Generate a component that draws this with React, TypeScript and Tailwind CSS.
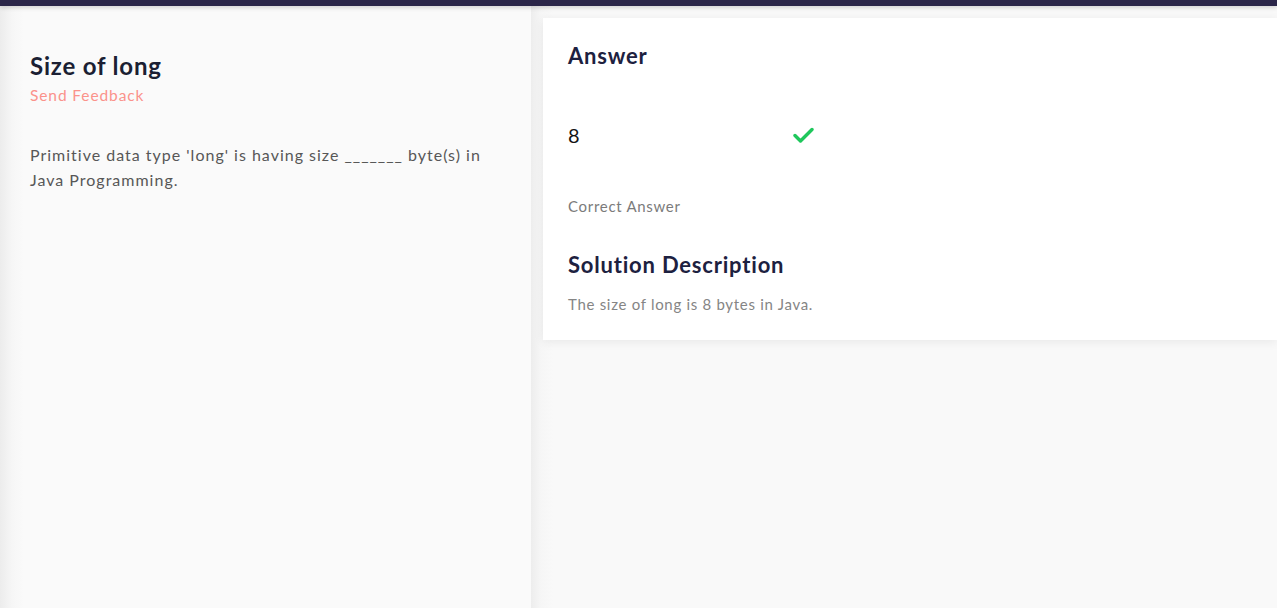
import React from "react";

const font = { fontFamily: "Lato, 'Noto Sans', sans-serif" };

function Check() {
  return (
    <svg width="21" height="16" viewBox="0 0 21 16" className="text-[#1fc75c]">
      <path d="M2 8.5 L7.5 14 L19 2.5" fill="none" stroke="currentColor" strokeWidth="3.4" strokeLinecap="round" strokeLinejoin="round" />
    </svg>
  );
}

export default function App() {
  return (
    <div className="h-[608px] w-[1277px] overflow-hidden flex flex-col bg-[#fafafa]" style={font}>
      {/* top bar */}
      <div className="h-[6px] bg-[#2b2649] shrink-0 shadow-[0_2px_4px_rgba(0,0,0,0.15)] relative z-10" />

      <div className="flex flex-1 min-h-0">
        {/* question panel */}
        <div className="w-[531px] shrink-0 bg-[#fafafa] bg-[linear-gradient(90deg,#ececec_0px,#f6f6f6_12px,#fafafa_24px)] px-[30px] pt-[45px]">
          <h1 className="text-[24px] font-bold text-[#1b1f33] leading-[30px] tracking-[0.8px]">Size of long</h1>
          <div className="text-[15.5px] text-[#fb928b] leading-[20px] mt-[4px] tracking-[0.9px]">Send Feedback</div>
          <p className="mt-[37px] text-[16px] leading-[25px] text-[#575757] w-[460px] tracking-[1px]">
            Primitive data type 'long' is having size _______ byte(s) in Java Programming.
          </p>
        </div>

        {/* answer panel */}
        <div className="flex-1 bg-[#f9f9f9] bg-[linear-gradient(90deg,#ededed_0px,#f6f6f6_10px,#f9f9f9_22px)] pl-[12px] pt-[12px]">
          <div className="bg-white shadow-[0_2px_10px_rgba(0,0,0,0.07)] pl-[25px] pt-[24px] pb-[27px] h-[322px]">
            <h2 className="text-[22px] font-bold text-[#1d2140] leading-[28px] tracking-[0.8px]">Answer</h2>
            <div className="flex items-center mt-[54px] h-[22px]">
              <span className="w-[225px] text-[20px] text-[#141414]">8</span>
              <Check />
            </div>
            <div className="mt-[50px] text-[15px] text-[#7b7b7b] leading-[20px] tracking-[0.7px]">Correct Answer</div>
            <h2 className="mt-[35px] text-[22px] font-bold text-[#1d2140] leading-[28px] tracking-[0.8px]">Solution Description</h2>
            <p className="mt-[15px] text-[15px] text-[#858585] leading-[20px] tracking-[0.7px]">The size of long is 8 bytes in Java.</p>
          </div>
        </div>
      </div>
    </div>
  );
}
